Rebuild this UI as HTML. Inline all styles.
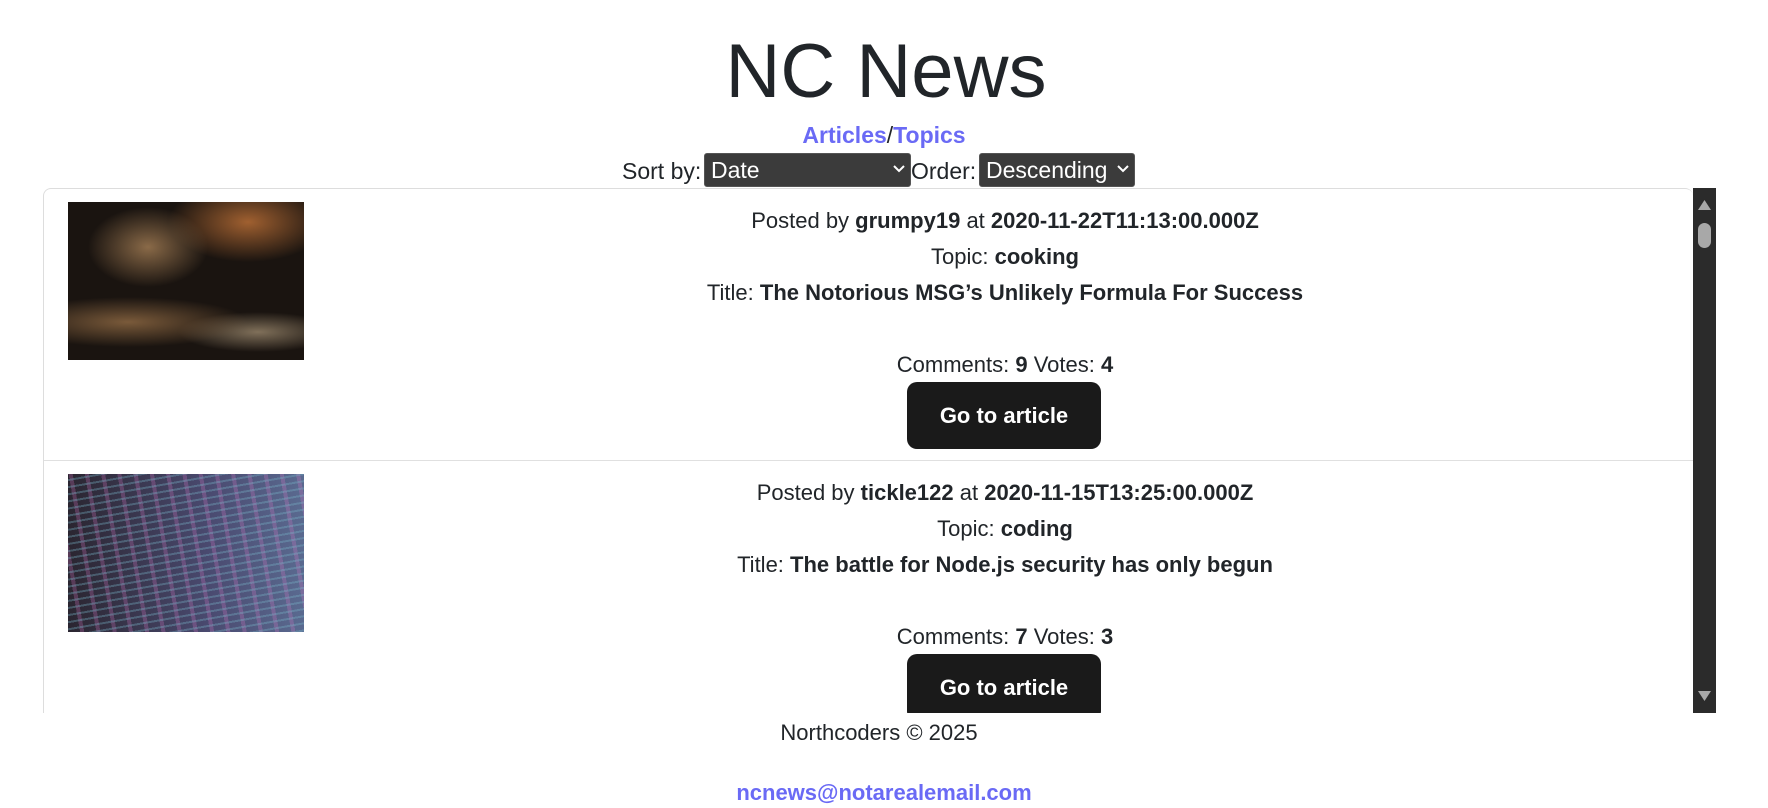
<!DOCTYPE html>
<html><head><meta charset="utf-8"><style>
*{box-sizing:border-box;margin:0;padding:0}
body{width:1768px;height:807px;overflow:hidden;background:#fff;font-family:"Liberation Sans",sans-serif;color:#212529;position:relative}
.abs{position:absolute}
.c{text-align:center;left:0;width:1768px}
a{color:#6a6af5;text-decoration:none}
.sel{position:absolute;background:#3b3b3b;color:#fff;border:1px solid #555;border-radius:3px;font-size:23px;height:34px;line-height:32px;padding-left:6px}
.sel svg{position:absolute;right:5px;top:11px}
.card{position:absolute;left:43px;width:1650px;height:272px;border-bottom:1px solid #e0e0e0}
.img{position:absolute;left:24px;top:13px;width:236px;height:158px;overflow:hidden}
.txt{position:absolute;left:0;width:1922px;text-align:center;font-size:22px;line-height:36px;top:14px}
.txt b{font-weight:bold}
.btn{position:absolute;left:863px;top:193px;width:194px;height:67px;background:#1a1a1a;border-radius:10px;color:#fff;font-weight:bold;font-size:22px;line-height:67px;text-align:center}
</style></head><body>
<div class="abs c" style="top:24px;font-size:76px;line-height:96px;left:2px">NC News</div>
<div class="abs c" style="top:120px;font-size:23px;line-height:30px"><a style="font-weight:bold">Articles</a>/<a style="font-weight:bold">Topics</a></div>
<div class="abs" style="left:622px;top:156px;font-size:23px;line-height:30px">Sort by:</div>
<div class="sel" style="left:704px;top:153px;width:207px">Date<svg width="12" height="8"><path d="M1 1l5 5 5-5" stroke="#fff" stroke-width="2" fill="none"/></svg></div>
<div class="abs" style="left:911px;top:156px;font-size:23px;line-height:30px">Order:</div>
<div class="sel" style="left:979px;top:153px;width:156px">Descending<svg width="12" height="8"><path d="M1 1l5 5 5-5" stroke="#fff" stroke-width="2" fill="none"/></svg></div>

<div class="abs" style="left:43px;top:188px;width:1650px;height:525px;border:1px solid #ddd;border-bottom:none;border-right:none;border-radius:8px 8px 0 0;overflow:hidden">
 <div class="card" style="left:0;top:0">
  <div class="img" style="background:radial-gradient(ellipse 60px 40px at 80px 45px,#8a6a48,transparent),radial-gradient(ellipse 80px 40px at 180px 20px,#a06030,transparent),radial-gradient(ellipse 120px 25px at 60px 120px,#7a5a3a,transparent),radial-gradient(ellipse 80px 20px at 190px 130px,#80705a,transparent),#1a1410"></div>
  <div class="txt">Posted by <b>grumpy19</b> at <b>2020-11-22T11:13:00.000Z</b><br>Topic: <b>cooking</b><br>Title: <b>The Notorious MSG’s Unlikely Formula For Success</b><br><br>Comments: <b>9</b> Votes: <b>4</b></div>
  <div class="btn">Go to article</div>
 </div>
 <div class="card" style="left:0;top:272px">
  <div class="img" style="background:repeating-linear-gradient(170deg,transparent 0 5px,rgba(120,180,200,.35) 5px 7px),repeating-linear-gradient(80deg,transparent 0 12px,rgba(220,120,200,.25) 12px 16px),linear-gradient(90deg,#2a2530,#4a4a70 60%,#5a6a90)"></div>
  <div class="txt">Posted by <b>tickle122</b> at <b>2020-11-15T13:25:00.000Z</b><br>Topic: <b>coding</b><br>Title: <b>The battle for Node.js security has only begun</b><br><br>Comments: <b>7</b> Votes: <b>3</b></div>
  <div class="btn">Go to article</div>
 </div>
</div>
<div class="abs" style="left:1693px;top:188px;width:23px;height:525px;background:#2b2b2b">
 <svg class="abs" style="left:5px;top:12px" width="13" height="10"><path d="M6.5 0L13 10H0z" fill="#a8a8a8"/></svg>
 <div class="abs" style="left:5px;top:35px;width:13px;height:25px;border-radius:7px;background:#a8a8a8"></div>
 <svg class="abs" style="left:5px;top:503px" width="13" height="10"><path d="M0 0H13L6.5 10z" fill="#a8a8a8"/></svg>
</div>
<div class="abs c" style="top:718px;font-size:22px;line-height:30px;left:-5px">Northcoders © 2025</div>
<div class="abs c" style="top:778px;font-size:22px;line-height:30px;left:0"><a style="font-weight:bold">ncnews@notarealemail.com</a></div>
</body></html>
